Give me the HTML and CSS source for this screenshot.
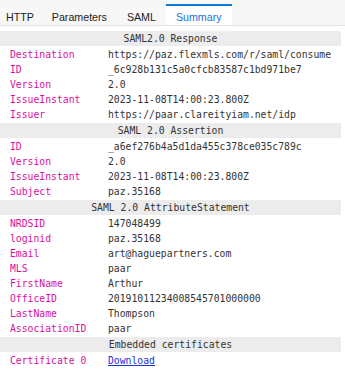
FILE: index.html
```html
<!DOCTYPE html>
<html lang="en">
<head>
    <meta charset="UTF-8">
    <title>SAML Summary</title>
    <link rel="stylesheet" href="styles.css">
</head>
<body>

    <nav class="tabs">
        <a class="tab first" href="#">HTTP</a>
        <a class="tab" href="#">Parameters</a>
        <a class="tab" href="#">SAML</a>
        <a class="tab active" href="#">Summary</a>
    </nav>

    <div class="summary">
        <div class="section-title">SAML2.0 Response</div>
        <div class="row"><span class="key">Destination</span><span class="val">https://paz.flexmls.com/r/saml/consume</span></div>
        <div class="row"><span class="key">ID</span><span class="val">_6c928b131c5a0cfcb83587c1bd971be7</span></div>
        <div class="row"><span class="key">Version</span><span class="val">2.0</span></div>
        <div class="row"><span class="key">IssueInstant</span><span class="val">2023-11-08T14:00:23.800Z</span></div>
        <div class="row"><span class="key">Issuer</span><span class="val">https://paar.clareityiam.net/idp</span></div>

        <div class="section-title">SAML 2.0 Assertion</div>
        <div class="row"><span class="key">ID</span><span class="val">_a6ef276b4a5d1da455c378ce035c789c</span></div>
        <div class="row"><span class="key">Version</span><span class="val">2.0</span></div>
        <div class="row"><span class="key">IssueInstant</span><span class="val">2023-11-08T14:00:23.800Z</span></div>
        <div class="row"><span class="key">Subject</span><span class="val">paz.35168</span></div>

        <div class="section-title">SAML 2.0 AttributeStatement</div>
        <div class="row"><span class="key">NRDSID</span><span class="val">147048499</span></div>
        <div class="row"><span class="key">loginid</span><span class="val">paz.35168</span></div>
        <div class="row"><span class="key">Email</span><span class="val">art@haguepartners.com</span></div>
        <div class="row"><span class="key">MLS</span><span class="val">paar</span></div>
        <div class="row"><span class="key">FirstName</span><span class="val">Arthur</span></div>
        <div class="row"><span class="key">OfficeID</span><span class="val">20191011234008545701000000</span></div>
        <div class="row"><span class="key">LastName</span><span class="val">Thompson</span></div>
        <div class="row"><span class="key">AssociationID</span><span class="val">paar</span></div>

        <div class="section-title">Embedded certificates</div>
        <div class="row"><span class="key">Certificate 0</span><span class="val"><a href="#">Download</a></span></div>
    </div>

</body>
</html>
```

FILE: styles.css
```css
*
{
    padding: 0;
    margin: 0;
    box-sizing: border-box;
}

body
{
    background: #fff;
    font-family: "DejaVu Sans Mono", "Liberation Mono", monospace;
    font-size: 9.75px;
    color: #333;
}

.tabs
{
    display: flex;
    height: 26px;
    background: #f7f7f7;
    border-bottom: 1px solid #e3e3e3;
}

.tab
{
    display: flex;
    align-items: center;
    padding: 2px 10px 0;
    margin-top: 4px;
    font-family: "Liberation Sans", Arial, sans-serif;
    font-size: 10.67px;
    color: #222;
    text-decoration: none;
    border-top: 2px solid transparent;
}

.tab.first
{
    padding-left: 6px;
    padding-right: 8px;
}

.tab.active
{
    background: #fff;
    color: #1a6fe0;
    border-top-color: #0a78d7;
}

.summary
{
    width: 341px;
    padding-top: 4px;
}

.section-title
{
    height: 15px;
    line-height: 15px;
    margin: 1px 0;
    background: #ececec;
    text-align: center;
    color: #333;
}

.row
{
    display: flex;
    height: 15px;
    line-height: 15px;
}

.key
{
    width: 108px;
    padding-left: 10px;
    color: #d7119c;
    white-space: nowrap;
}

.val
{
    white-space: nowrap;
}

.val a
{
    color: #1a33d6;
    text-decoration: underline;
}
```
